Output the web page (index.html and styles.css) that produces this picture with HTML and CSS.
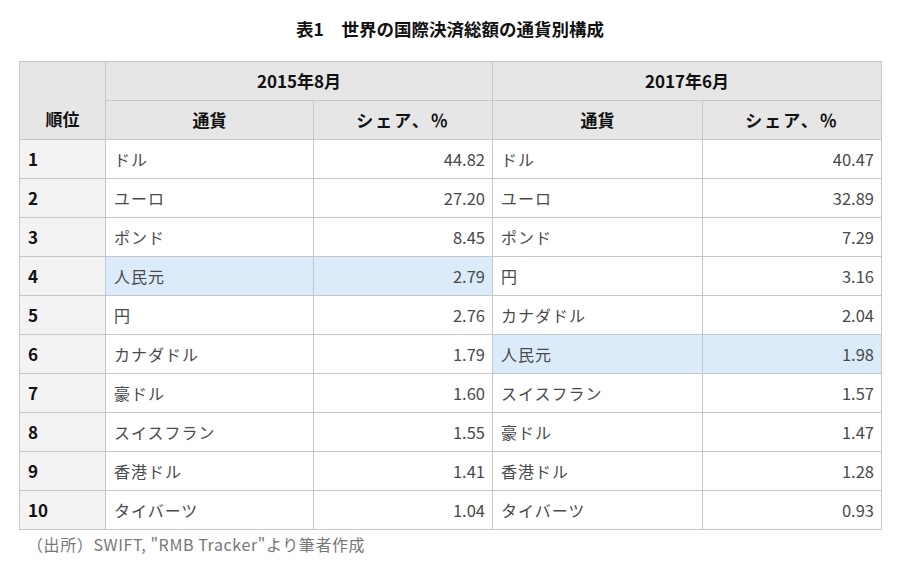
FILE: index.html
```html
<!DOCTYPE html>
<html lang="ja">
<head>
<meta charset="utf-8">
<link rel="stylesheet" href="styles.css">
</head>
<body>
<div class="wrap">
  <h1 class="title">表1　世界の国際決済総額の通貨別構成</h1>
  <table class="tbl">
    <colgroup>
      <col class="c-rank"><col class="c-cur1"><col class="c-sh1"><col class="c-cur2"><col class="c-sh2">
    </colgroup>
    <thead>
      <tr><th rowspan="2" class="rank-h">順位</th><th colspan="2">2015年8月</th><th colspan="2">2017年6月</th></tr>
      <tr><th>通貨</th><th class="kana">シェア、％</th><th>通貨</th><th class="kana">シェア、％</th></tr>
    </thead>
    <tbody>
      <tr><td class="rank">1</td><td class="cur">ドル</td><td class="num">44.82</td><td class="cur">ドル</td><td class="num">40.47</td></tr>
      <tr><td class="rank">2</td><td class="cur">ユーロ</td><td class="num">27.20</td><td class="cur">ユーロ</td><td class="num">32.89</td></tr>
      <tr><td class="rank">3</td><td class="cur">ポンド</td><td class="num">8.45</td><td class="cur">ポンド</td><td class="num">7.29</td></tr>
      <tr><td class="rank">4</td><td class="cur hl">人民元</td><td class="num hl">2.79</td><td class="cur">円</td><td class="num">3.16</td></tr>
      <tr><td class="rank">5</td><td class="cur">円</td><td class="num">2.76</td><td class="cur">カナダドル</td><td class="num">2.04</td></tr>
      <tr><td class="rank">6</td><td class="cur">カナダドル</td><td class="num">1.79</td><td class="cur hl">人民元</td><td class="num hl">1.98</td></tr>
      <tr><td class="rank">7</td><td class="cur">豪ドル</td><td class="num">1.60</td><td class="cur">スイスフラン</td><td class="num">1.57</td></tr>
      <tr><td class="rank">8</td><td class="cur">スイスフラン</td><td class="num">1.55</td><td class="cur">豪ドル</td><td class="num">1.47</td></tr>
      <tr><td class="rank">9</td><td class="cur">香港ドル</td><td class="num">1.41</td><td class="cur">香港ドル</td><td class="num">1.28</td></tr>
      <tr><td class="rank">10</td><td class="cur">タイバーツ</td><td class="num">1.04</td><td class="cur">タイバーツ</td><td class="num">0.93</td></tr>
    </tbody>
  </table>
  <p class="note">（出所）SWIFT, "RMB Tracker"より筆者作成</p>
</div>
</body>
</html>
```

FILE: styles.css
```css
* { box-sizing: border-box; }
html, body { margin: 0; padding: 0; background: #fff; }
body {
  font-family: "Noto Sans CJK JP", "Noto Sans", sans-serif;
  color: #333;
}
.wrap {
  width: 862px;
  margin-left: 19px;
  padding-top: 17px;
}
.title {
  margin: 0 0 21px 0;
  font-size: 17.5px;
  line-height: 23px;
  font-weight: 700;
  color: #111;
  text-align: center;
}
.tbl {
  border-collapse: collapse;
  table-layout: fixed;
  width: 862px;
  font-size: 16px;
}
.c-rank { width: 86px; }
.c-cur1 { width: 208px; }
.c-sh1 { width: 179px; }
.c-cur2 { width: 210px; }
.c-sh2 { width: 179px; }
.tbl th, .tbl td {
  border: 1px solid #c6c6c6;
  height: 39px;
  padding: 0 8px;
  line-height: 20px;
  white-space: nowrap;
}
.tbl th {
  background: #e6e6e6;
  font-weight: 700;
  font-size: 17px;
  color: #111;
  text-align: center;
}
.tbl th.kana { letter-spacing: 2px; }
.tbl th.rank-h { padding-top: 36px; }
.tbl td { color: #4a4a4a; font-weight: 400; }
.tbl td.cur { letter-spacing: 1px; }
.tbl td.rank {
  background: #f3f3f3;
  font-weight: 700;
  font-size: 17px;
  color: #111;
}
.tbl td.num { text-align: right; padding-right: 7px; font-size: 16.5px; }
.tbl td.hl { background: #dcebfa; }
.note {
  margin: 4px 0 0 8px;
  font-size: 16px;
  letter-spacing: 0.6px;
  color: #777;
  line-height: 20px;
}
```
